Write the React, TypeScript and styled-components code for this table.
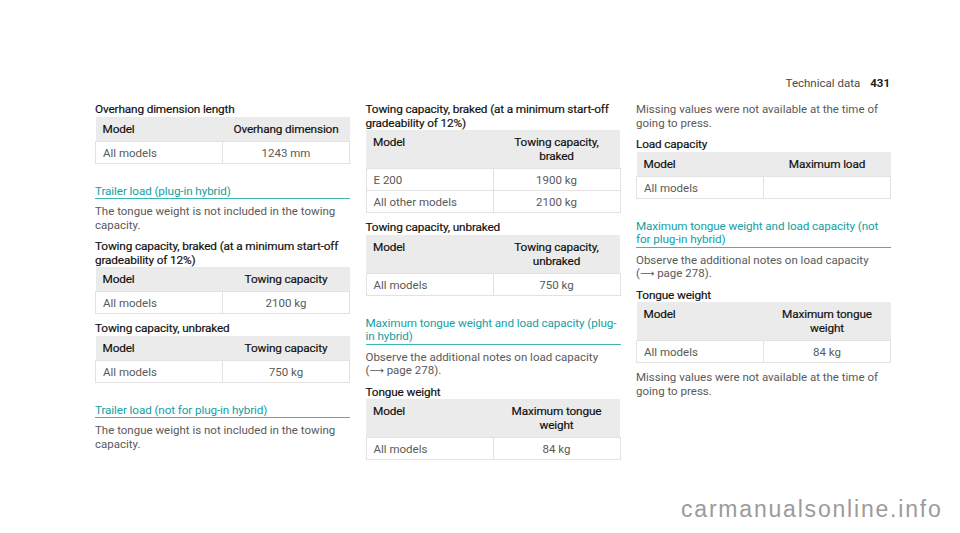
import React from "react";
import styled, { createGlobalStyle } from "styled-components";

const Global = createGlobalStyle`
  html, body { margin: 0; padding: 0; background: #fff; }
  #root { width: 960px; height: 533px; }
`;

const Page = styled.div`
  position: relative;
  width: 960px;
  height: 533px;
  box-sizing: border-box;
  padding: 76px 70px 0 95px;
  background: #fff;
  overflow: hidden;
  font-family: Roboto, "Liberation Sans", sans-serif;
  font-size: 11.5px;
`;

const RunningHead = styled.div`
  display: flex;
  justify-content: flex-end;
  align-items: baseline;
  gap: 10px;
  line-height: 14px;
  color: #4a4a4a;
  font-size: 11.5px;
`;

const PageNo = styled.span`
  font-weight: 700;
  color: #1e1e1e;
`;

const Columns = styled.div`
  display: grid;
  grid-template-columns: repeat(3, 255px);
  column-gap: 15.5px;
  margin-top: 13px;
  align-items: start;
`;

const Column = styled.div`
  display: flex;
  flex-direction: column;
`;

const SectionTitle = styled.h2`
  margin: 21px 0 0;
  padding: 0;
  font-size: 11.7px;
  font-weight: 400;
  line-height: 13.5px;
  color: #13a0a3;
  border-bottom: 1.5px solid #3cb5b5;
  letter-spacing: -0.1px;
  &:first-child { margin-top: 0; }
`;

const SubHeading = styled.h3`
  margin: 8px 0 0;
  font-size: 11.8px;
  font-weight: 400;
  line-height: 13.5px;
  color: #111;
  letter-spacing: -0.15px;
  -webkit-text-stroke: 0.18px #111;
  &:first-child { margin-top: 0; }
`;

const Paragraph = styled.p`
  margin: 8px 0 0;
  font-size: 11.5px;
  line-height: 13.5px;
  color: #5a5a5a;
  &:first-child { margin-top: 0; }
  ${SectionTitle} + & { margin-top: 6px; }
`;

const Arrow = styled.span`
  font-family: "DejaVu Sans", sans-serif;
  font-size: 10px;
`;

const Table = styled.table`
  width: 100%;
  border-collapse: collapse;
  table-layout: fixed;
  margin-top: 0;
  font-size: 11.5px;
  line-height: 14px;
`;

const HeadCell = styled.th<{ $align?: "left" | "center" }>`
  background: #ebebeb;
  padding: 5px 7px 5px;
  font-weight: 400;
  font-size: 11.8px;
  color: #111;
  line-height: 14px;
  text-align: ${(p) => p.$align ?? "left"};
  vertical-align: top;
  letter-spacing: -0.15px;
  -webkit-text-stroke: 0.18px #111;
`;

const Cell = styled.td<{ $align?: "left" | "center" }>`
  border: 1px solid #e2e2e2;
  padding: 4px 7px 3px;
  color: #5a5a5a;
  text-align: ${(p) => p.$align ?? "left"};
  height: 14px;
`;

const Watermark = styled.div`
  position: absolute;
  left: 681px;
  top: 496px;
  font-family: "Liberation Sans", Arial, sans-serif;
  font-size: 23px;
  letter-spacing: 1.8px;
  color: #9b9b9b;
  line-height: 26px;
`;

type Row = [string, string];

function DataTable({ head, rows }: { head: [React.ReactNode, React.ReactNode]; rows: Row[] }) {
  return (
    <Table>
      <thead>
        <tr>
          <HeadCell>{head[0]}</HeadCell>
          <HeadCell $align="center">{head[1]}</HeadCell>
        </tr>
      </thead>
      <tbody>
        {rows.map((r, i) => (
          <tr key={i}>
            <Cell>{r[0]}</Cell>
            <Cell $align="center">{r[1]}</Cell>
          </tr>
        ))}
      </tbody>
    </Table>
  );
}

export default function App() {
  return (
    <>
      <Global />
      <Page>
        <RunningHead>
          <span>Technical data</span>
          <PageNo>431</PageNo>
        </RunningHead>
        <Columns>
          <Column>
            <SubHeading>Overhang dimension length</SubHeading>
            <DataTable head={["Model", "Overhang dimension"]} rows={[["All models", "1243 mm"]]} />
            <SectionTitle>Trailer load (plug-in hybrid)</SectionTitle>
            <Paragraph>
              The tongue weight is not included in the towing capacity.
            </Paragraph>
            <SubHeading>
              Towing capacity, braked (at a minimum start-off gradeability of 12%)
            </SubHeading>
            <DataTable head={["Model", "Towing capacity"]} rows={[["All models", "2100 kg"]]} />
            <SubHeading>Towing capacity, unbraked</SubHeading>
            <DataTable head={["Model", "Towing capacity"]} rows={[["All models", "750 kg"]]} />
            <SectionTitle>Trailer load (not for plug-in hybrid)</SectionTitle>
            <Paragraph>
              The tongue weight is not included in the towing capacity.
            </Paragraph>
          </Column>

          <Column>
            <SubHeading>
              Towing capacity, braked (at a minimum start-off gradeability of 12%)
            </SubHeading>
            <DataTable
              head={["Model", <>Towing capacity,<br />braked</>]}
              rows={[
                ["E 200", "1900 kg"],
                ["All other models", "2100 kg"],
              ]}
            />
            <SubHeading>Towing capacity, unbraked</SubHeading>
            <DataTable
              head={["Model", <>Towing capacity,<br />unbraked</>]}
              rows={[["All models", "750 kg"]]}
            />
            <SectionTitle>
              Maximum tongue weight and load capacity (plug-
              <br />
              in hybrid)
            </SectionTitle>
            <Paragraph>
              Observe the additional notes on load capacity
              <br />
              (<Arrow>⟶</Arrow> page 278).
            </Paragraph>
            <SubHeading>Tongue weight</SubHeading>
            <DataTable
              head={["Model", <>Maximum tongue<br />weight</>]}
              rows={[["All models", "84 kg"]]}
            />
          </Column>

          <Column>
            <Paragraph>
              Missing values were not available at the time of
              <br />
              going to press.
            </Paragraph>
            <SubHeading>Load capacity</SubHeading>
            <DataTable head={["Model", "Maximum load"]} rows={[["All models", ""]]} />
            <SectionTitle>
              Maximum tongue weight and load capacity (not
              <br />
              for plug-in hybrid)
            </SectionTitle>
            <Paragraph>
              Observe the additional notes on load capacity
              <br />
              (<Arrow>⟶</Arrow> page 278).
            </Paragraph>
            <SubHeading>Tongue weight</SubHeading>
            <DataTable
              head={["Model", <>Maximum tongue<br />weight</>]}
              rows={[["All models", "84 kg"]]}
            />
            <Paragraph>
              Missing values were not available at the time of
              <br />
              going to press.
            </Paragraph>
          </Column>
        </Columns>
        <Watermark>carmanualsonline.info</Watermark>
      </Page>
    </>
  );
}
